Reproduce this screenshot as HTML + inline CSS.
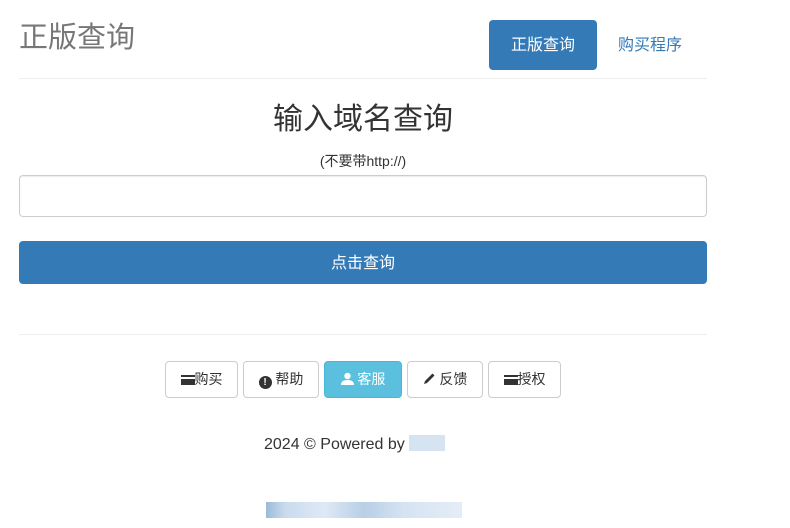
<!DOCTYPE html>
<html><head><meta charset="utf-8"><style>
body{margin:0;background:#fff;font-family:"Liberation Sans","Noto Sans CJK SC",sans-serif;color:#333;width:790px;height:528px;position:relative;overflow:hidden}
.a{position:absolute}
.btn{position:absolute;top:361px;height:35px;border:1px solid #ccc;border-radius:4px;background:#fff;font-size:14px;line-height:35px;text-align:center;color:#333}
</style></head><body>
<div class="a" style="left:19px;top:18px;font-size:29px;color:#777;line-height:40px">正版查询</div>
<div class="a" style="left:489px;top:20px;width:108px;height:50px;background:#337ab7;border-radius:4px;color:#fff;font-size:16px;line-height:52px;text-align:center">正版查询</div>
<div class="a" style="left:618px;top:20px;height:50px;line-height:52px;color:#337ab7;font-size:16px">购买程序</div>
<div class="a" style="left:19px;top:78px;width:688px;height:1px;background:#eee"></div>
<div class="a" style="left:19px;top:99px;width:688px;text-align:center;font-size:30px;line-height:42px">输入域名查询</div>
<div class="a" style="left:19px;top:151px;width:688px;text-align:center;font-size:14px;line-height:20px">(不要带http://)</div>
<div class="a" style="left:19px;top:175px;width:686px;height:40px;border:1px solid #ccc;border-radius:4px;box-shadow:inset 0 1px 1px rgba(0,0,0,.075)"></div>
<div class="a" style="left:19px;top:241px;width:688px;height:43px;background:#337ab7;border-radius:4px;color:#fff;font-size:16px;line-height:45px;text-align:center">点击查询</div>
<div class="a" style="left:19px;top:334px;width:688px;height:1px;background:#eee"></div>
<div class="btn" style="left:165px;width:71px"><span style="display:inline-block;width:14px;height:10px;background:#333;vertical-align:-1px;border-top:2px solid #333;box-sizing:border-box;box-shadow:inset 0 2px 0 #fff"></span>购买</div>
<div class="btn" style="left:243px;width:74px"><span style="display:inline-block;width:13px;height:13px;border-radius:50%;background:#333;color:#fff;font-size:10px;line-height:13px;font-weight:bold;vertical-align:-1px">!</span> 帮助</div>
<div class="btn" style="left:324px;width:76px;background:#5bc0de;border-color:#46b8da;color:#fff"><svg width="13" height="13" viewBox="0 0 13 13" style="vertical-align:-1px"><circle cx="6.5" cy="4" r="3.2" fill="#fff"/><path d="M0 13 Q0 8 6.5 8 Q13 8 13 13Z" fill="#fff"/></svg> 客服</div>
<div class="btn" style="left:407px;width:74px"><svg width="13" height="13" viewBox="0 0 13 13" style="vertical-align:-1px"><path d="M1 12 L2 9 L9.5 1.5 L11.5 3.5 L4 11Z" fill="#333"/></svg> 反馈</div>
<div class="btn" style="left:488px;width:71px"><span style="display:inline-block;width:14px;height:10px;background:#333;vertical-align:-1px;box-shadow:inset 0 2px 0 #fff;border-top:2px solid #333;box-sizing:border-box"></span>授权</div>
<div class="a" style="left:264px;top:434px;font-size:16px;line-height:22px">2024 © Powered by <span style="display:inline-block;width:36px;height:16px;background:#d6e4f2;vertical-align:-2px"></span></div>
<div class="a" style="left:266px;top:502px;width:196px;height:16px;background:linear-gradient(90deg,#9dbad8 0,#c9dbee 10%,#dfe9f5 30%,#b8cfe6 50%,#d5e3f2 70%,#e4edf7 100%)"></div>
</body></html>
